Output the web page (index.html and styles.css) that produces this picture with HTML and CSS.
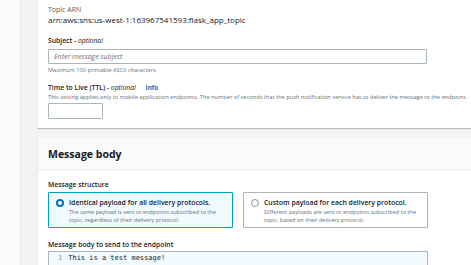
FILE: index.html
```html
<!DOCTYPE html>
<html lang="en">
<head>
    <meta charset="UTF-8">
    <meta name="viewport" content="width=device-width, initial-scale=1.0">
    <title>Publish message</title>
    <link rel="stylesheet" href="styles.css">
</head>
<body>
    <div id="layout">
        <div class="rail"></div>
        <div class="gutter"></div>
        <div class="content">
            <section class="card card-top">
                <div class="label-light">Topic ARN</div>
                <div class="value">arn:aws:sns:us-west-1:163967541593:flask_app_topic</div>

                <div class="label subject">Subject - <i>optional</i></div>
                <div class="input wide">Enter message subject</div>
                <div class="hint">Maximum 100 printable ASCII characters</div>

                <div class="label ttl">Time to Live (TTL) - <i>optional</i> <span class="info">Info</span></div>
                <div class="hint desc">This setting applies only to mobile application endpoints. The number of seconds that the push notification service has to deliver the message to the endpoint.</div>
                <div class="input small"></div>
            </section>

            <section class="card">
                <div class="card-head">
                    <h2>Message body</h2>
                </div>
                <div class="card-body">
                    <div class="label">Message structure</div>
                    <div class="tiles">
                        <div class="tile selected">
                            <span class="radio"></span>
                            <div>
                                <div class="tile-title">Identical payload for all delivery protocols.</div>
                                <div class="tile-desc">The same payload is sent to endpoints subscribed to the topic, regardless of their delivery protocol.</div>
                            </div>
                        </div>
                        <div class="tile">
                            <span class="radio"></span>
                            <div>
                                <div class="tile-title">Custom payload for each delivery protocol.</div>
                                <div class="tile-desc">Different payloads are sent to endpoints subscribed to the topic, based on their delivery protocol.</div>
                            </div>
                        </div>
                    </div>
                    <div class="label body-label">Message body to send to the endpoint</div>
                    <div class="editor">
                        <span class="ln">1</span>
                        <span class="code">This is a test message!</span>
                    </div>
                </div>
            </section>
        </div>
    </div>
</body>
</html>
```

FILE: styles.css
```css
html, body {
    margin: 0;
    height: 100%;
    overflow: hidden;
}
body {
    font-family: "Open Sans", "Liberation Sans", sans-serif;
    color: #16191f;
    background: #fff;
}
#layout {
    display: flex;
    height: 265px;
}
.rail {
    width: 20px;
    flex-shrink: 0;
    background: #fbfbfb;
}
.gutter {
    width: 18px;
    flex-shrink: 0;
    background: #f2f3f3;
    border-left: 1px solid #eaeded;
    box-sizing: border-box;
}
.content {
    flex: 1;
    background: #f2f3f3;
    display: flex;
    flex-direction: column;
    gap: 10px;
    min-width: 0;
}
.card {
    width: 460px;
    background: #fff;
    box-shadow: 0 1px 1px rgba(0,21,41,0.25);
    flex-shrink: 0;
}

/* first card, cut off at the top */
.card-top {
    padding: 5px 0 9px 10px;
    margin-top: -1px;
    height: 129px;
    box-sizing: border-box;
}
.label-light {
    font-size: 7px;
    color: #545b64;
    line-height: 11px;
}
.value {
    font-size: 8px;
    line-height: 10px;
}
.label {
    font-size: 6.8px;
    font-weight: 600;
    line-height: 11px;
    margin-bottom: 3px;
}
.label i {
    font-weight: 400;
}
.label.subject {
    margin-top: 10px;
}
.label.ttl {
    margin-top: 7px;
    margin-bottom: 0;
}
.info {
    color: #0073bb;
    font-weight: 700;
    font-style: normal;
    font-size: 6.3px;
    margin-left: 8px;
}
.input {
    border: 1px solid #aab7b8;
    border-radius: 1px;
    box-sizing: border-box;
    height: 15px;
    font-size: 7px;
    font-style: italic;
    color: #687078;
    padding-left: 5px;
    line-height: 13px;
}
.input.wide {
    width: 379px;
}
.input.small {
    width: 55px;
    height: 16px;
    margin-top: 1px;
}
.hint {
    font-size: 5.7px;
    color: #687078;
    line-height: 9px;
    margin-top: 2px;
    white-space: nowrap;
}
.hint.desc {
    margin-top: 0;
}

/* message body card */
.card-head {
    background: #fafafa;
    height: 31px;
    padding-left: 10px;
    display: flex;
    align-items: center;
    border-bottom: 1px solid #eaeded;
}
.card-head h2 {
    margin: 0;
    font-size: 10.5px;
    font-weight: 700;
}
.card-body {
    padding: 9px 0 0 10px;
}
.tiles {
    display: flex;
    gap: 10px;
    margin: -1px 0 11px;
}
.tile {
    width: 185px;
    height: 36px;
    box-sizing: border-box;
    border: 1px solid #aab7b8;
    border-radius: 1px;
    display: flex;
    gap: 5px;
    padding: 4px 8px 0 7px;
}
.tile.selected {
    background: #f1faff;
    border-color: #00a1c9;
}
.radio {
    width: 6px;
    height: 6px;
    border-radius: 50%;
    border: 1px solid #879596;
    background: #fff;
    flex-shrink: 0;
    margin-top: 2px;
}
.tile.selected .radio {
    border: 2px solid #0073bb;
    width: 4px;
    height: 4px;
}
.tile-title {
    font-size: 6.9px;
    font-weight: 600;
    line-height: 11px;
}
.tile-desc {
    font-size: 5.6px;
    color: #687078;
    line-height: 8px;
}
.body-label {
    margin-bottom: 1px;
}
.editor {
    width: 380px;
    height: 20px;
    box-sizing: border-box;
    border: 1px solid #aab7b8;
    background: #f1faff;
    display: flex;
    gap: 6px;
    padding: 1px 0 0 9px;
    font-family: "DejaVu Sans Mono", "Liberation Mono", monospace;
    font-size: 7px;
    line-height: 11px;
}
.ln {
    color: #879596;
}
```
